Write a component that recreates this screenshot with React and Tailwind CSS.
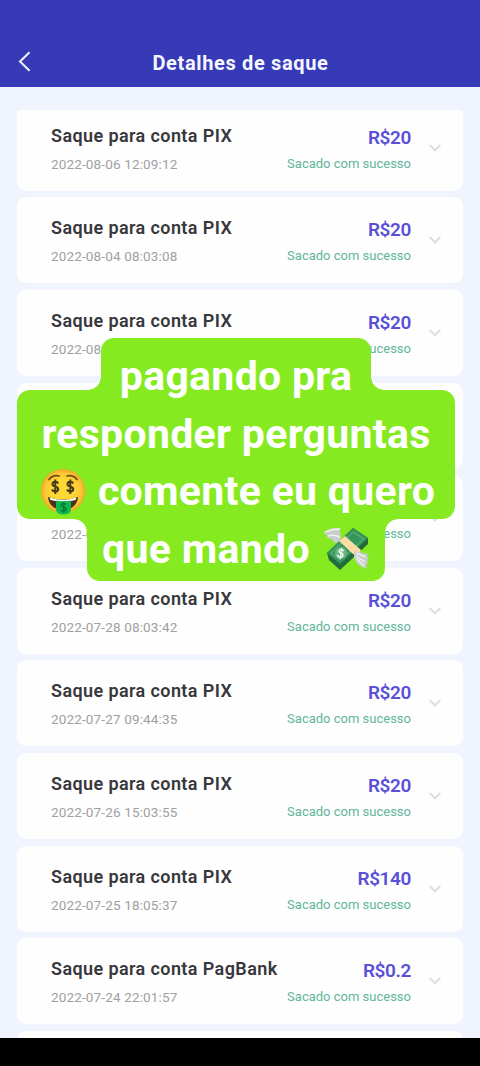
import React from "react"

const withdrawals = [
    { id: 1, account: "PIX", date: "2022-08-06 12:09:12", amount: "R$20" },
    { id: 2, account: "PIX", date: "2022-08-04 08:03:08", amount: "R$20" },
    { id: 3, account: "PIX", date: "2022-08-03 08:05:21", amount: "R$20" },
    { id: 4, account: "PIX", date: "2022-08-01 08:02:17", amount: "R$20" },
    { id: 5, account: "PIX", date: "2022-07-29 08:04:36", amount: "R$20" },
    { id: 6, account: "PIX", date: "2022-07-28 08:03:42", amount: "R$20" },
    { id: 7, account: "PIX", date: "2022-07-27 09:44:35", amount: "R$20" },
    { id: 8, account: "PIX", date: "2022-07-26 15:03:55", amount: "R$20" },
    { id: 9, account: "PIX", date: "2022-07-25 18:05:37", amount: "R$140" },
    { id: 10, account: "PagBank", date: "2022-07-24 22:01:57", amount: "R$0.2" },
]

function WithdrawalCard({ item }) {
    return (
        <div className="flex h-[86px] shrink-0 justify-between rounded-[9px] bg-[#fefefe] pl-[34px] pr-[22px]">
            <div className="flex flex-col whitespace-nowrap pt-[19px]">
                <span className="text-[18px] font-semibold leading-6 tracking-[0.4px] text-[#38373b]">
                    Saque para conta {item.account}
                </span>
                <span className="mt-[7px] text-[13.5px] leading-[18px] tracking-[0.15px] text-[#a0a0a2]">{item.date}</span>
            </div>
            <div className="flex gap-[18px]">
                <div className="flex flex-col items-end whitespace-nowrap pt-[21px]">
                    <span className="text-[19px] font-semibold leading-6 tracking-[-0.4px] text-[#5a50d8]">{item.amount}</span>
                    <span className="mt-[5px] text-[13px] leading-[18px] text-[#62b59c]">Sacado com sucesso</span>
                </div>
                <svg className="mt-[39px] h-[8px] w-[12px]" viewBox="0 0 12 8" fill="none" stroke="#dedde1" strokeWidth="2">
                    <path d="M.7 1 6 6.3 11.3 1" />
                </svg>
            </div>
        </div>
    )
}

function MoneyFace() {
    return (
        <svg className="h-[46px] w-[46px] shrink-0" viewBox="0 0 46 46">
            <defs>
                <radialGradient id="face">
                    <stop offset="0.5" stopColor="#fdd835" />
                    <stop offset="0.85" stopColor="#fbc532" />
                    <stop offset="1" stopColor="#f3a32b" />
                </radialGradient>
            </defs>
            <circle cx="23" cy="22" r="22" fill="url(#face)" />
            <path d="M9 10.500Q13 5.500 19 7M27 7Q33 5.500 37 10.500" fill="none" stroke="#6d4a1c" strokeWidth="1.800" strokeLinecap="round" />
            <g fill="none" stroke="#4a3a1c" strokeWidth="2">
                <path id="eye" d="M18.200 14.500C17 12 12.500 12.400 12.500 15.200C12.500 18.600 18.300 16.800 18.300 20.200C18.300 23 13.200 23.200 12 20.500M15.300 10.500V25" />
                <use href="#eye" x="15" />
            </g>
            <path d="M8 28Q23 33 38 28Q37 40 23 41Q9 40 8 28Z" fill="#493419" />
            <path d="M9.500 28.500Q23 33 36.500 28.500L35.500 31Q23 34 10.500 31Z" fill="#fff" />
            <path d="M16 31.500Q23 33.200 31 31.500V40Q31 45.500 23.500 45.500Q16 45.500 16 40Z" fill="#0fb94f" />
            <path d="M26 35.500C24.500 33.700 21 34.300 21.200 36.500C21.400 39 26.300 37.700 26.300 40.300C26.300 42.700 22 42.600 20.800 40.800M23.700 33V44" fill="none" stroke="#087a35" strokeWidth="1.500" />
        </svg>
    )
}

function FlyingMoney() {
    return (
        <svg className="h-[46px] w-[48px] shrink-0" viewBox="0 0 48 46">
            <path d="M1 7Q8 1 18 2L19 16L12 17Q11 12 5 12Q6 8 1 7Z" fill="#c9cdca" />
            <path d="M3 6Q10 3 18 3M6 10Q12 8 18 11" fill="none" stroke="#f0f1ef" strokeWidth="1.500" />
            <path d="M5 27 31 2 46 12V18L18 44 7 34Z" fill="#226b3d" />
            <path d="M5 27 31 2 46 12 18 38Z" fill="#36955a" />
            <path d="M9 27 31 6 42 13 18 34Z" fill="none" stroke="#65b77e" />
            <path d="M17 15 23 10 39 24 36 31 31 28Z" fill="#fbdca3" />
            <circle cx="19" cy="27" r="6" fill="#65b77e" />
            <path d="M22 25Q18 22 17 25Q17 27 20 27Q22 29 20 31Q17 32 15 29M20 22 18 33" fill="none" stroke="#eef7ed" strokeWidth="1.500" />
            <path d="M32 25 47 28Q43 30 47 32Q44 34 46 37Q43 39 45 43Q35 40 32 32Z" fill="#c9cdca" />
            <path d="M34 27 44 31M34 30 43 36M35 33 42 40" stroke="#eff0ef" strokeWidth="1.500" />
        </svg>
    )
}

function Caption() {
    return (
        <div className="absolute left-[17px] top-[338px] h-[243px] w-[438px] font-bold text-white">
            {/* Stepped bubble */}
            <div className="flex flex-col">
                <div className="ml-[71px] flex h-[52px] w-[296px] items-end">
                    <div className="h-[13px] w-[13px] bg-[radial-gradient(circle_at_0_0,transparent_12.5px,#86ea20_13px)]" />
                    <div className="h-[52px] w-[270px] rounded-t-[13px] bg-[#86ea20]" />
                    <div className="h-[13px] w-[13px] bg-[radial-gradient(circle_at_100%_0,transparent_12.5px,#86ea20_13px)]" />
                </div>
                <div className="h-[129px] rounded-[13px] bg-[#86ea20]" />
                <div className="ml-[57px] flex h-[62px] w-[324px] items-start">
                    <div className="h-[13px] w-[13px] bg-[radial-gradient(circle_at_0_100%,transparent_12.5px,#86ea20_13px)]" />
                    <div className="h-[62px] w-[298px] rounded-b-[13px] bg-[#86ea20]" />
                    <div className="h-[13px] w-[13px] bg-[radial-gradient(circle_at_100%_100%,transparent_12.5px,#86ea20_13px)]" />
                </div>
            </div>
            <div className="absolute inset-0 flex flex-col items-center whitespace-nowrap pt-[10px] text-[41px] leading-[57.5px] tracking-[0.3px]">
                <div>pagando pra</div>
                <div>responder perguntas</div>
                <div className="flex items-center gap-[12px] pl-[3px]">
                    <MoneyFace />
                    <span>comente eu quero</span>
                </div>
                <div className="flex items-center gap-[12px]">
                    <span>que mando</span>
                    <FlyingMoney />
                </div>
            </div>
        </div>
    )
}

export default function App() {
    return (
        <div className="relative flex h-[1066px] w-[480px] flex-col overflow-hidden bg-[#f0f4fe] font-['Roboto',sans-serif]">
            {/* Header */}
            <header className="relative flex h-[87px] shrink-0 items-end justify-center bg-[#373ab6] pb-[9px]">
                <svg className="absolute left-[18px] top-[51px] h-[21px] w-[13px]" viewBox="0 0 13 21" fill="none" stroke="#f2f3ff" strokeWidth="2">
                    <path d="M11.500 1.200 2 10.500 11.500 19.800" />
                </svg>
                <h1 className="pl-px text-[20px] font-bold leading-[30px] tracking-[0.65px] text-[#f5f6ff]">Detalhes de saque</h1>
            </header>

            {/* Withdrawals */}
            <main className="mx-[17px] mt-[23px] flex-1 overflow-hidden rounded-t-[3px]">
                <div className="-mt-[5.4px] flex flex-col gap-[6.65px]">
                    {withdrawals.map((item) => (
                        <WithdrawalCard key={item.id} item={item} />
                    ))}
                    <div className="h-[86px] shrink-0 rounded-[9px] bg-[#fefefe]" />
                </div>
            </main>

            <div className="h-[28px] shrink-0 bg-black" />
            <Caption />
        </div>
    )
}
